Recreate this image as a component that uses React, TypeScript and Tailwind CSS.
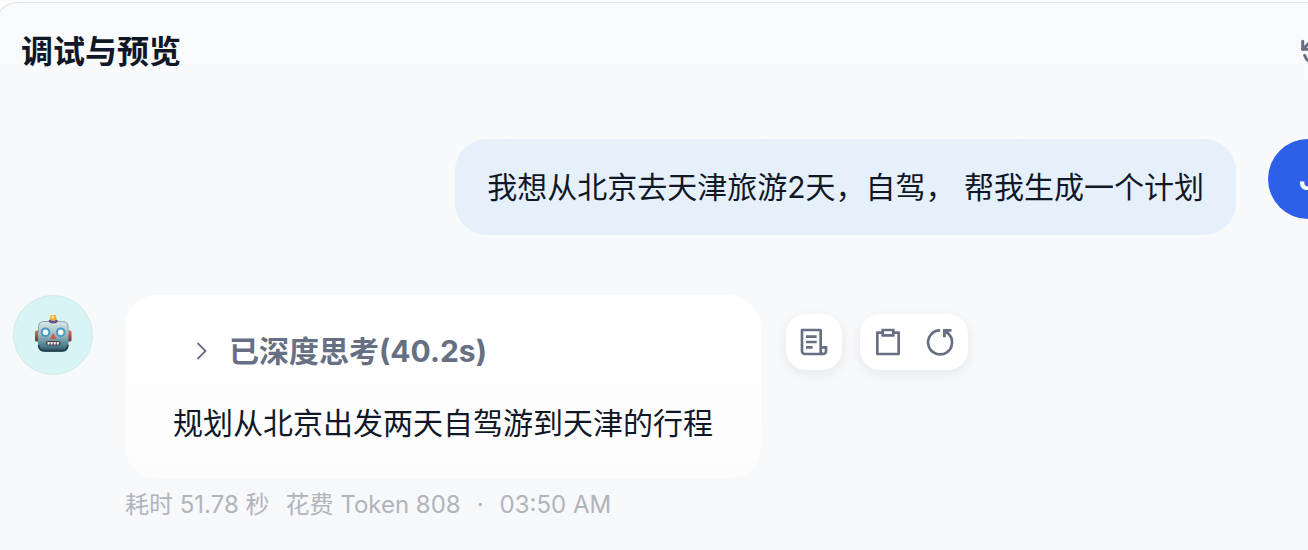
import { RiClipboardLine, RiFileList3Line } from 'react-icons/ri';

const META = ['耗时 51.78 秒', '花费 Token 808', '·', '03:50 AM'];

function RestartIcon() {
  return (
    <svg viewBox="0 0 32 32" className="size-8" fill="none" aria-hidden="true">
      <path d="M16.200 4.400A12 12 0 1 0 23.400 6.900L21.400 5.200" stroke="currentColor" strokeWidth="2.700" />
      <path d="M19 3H27.500V5.800H24.600L23.400 8.800L21.800 7.400V11.200H19Z" fill="currentColor" />
    </svg>
  );
}

function ResetIcon() {
  return (
    <svg viewBox="0 0 32 32" className="size-8" fill="none" stroke="currentColor" strokeWidth="3" strokeLinecap="round" strokeLinejoin="round" aria-hidden="true">
      <path d="M2.700 5.300V13.300H10.700M29.300 26.700V18.700H21.300" />
      <path d="M2.700 13.300L8.500 7.600A11.600 11.600 0 0 1 27 12M4.700 19.500A11.600 11.600 0 0 0 23.500 24.400L29.300 18.700" />
    </svg>
  );
}

function RobotIcon() {
  return (
    <svg viewBox="0 0 40 40" className="size-10" role="img" aria-label="robot">
      <defs>
        <linearGradient id="robot-face" x1="0" y1="0" x2="0" y2="1">
          <stop offset="0" stopColor="#dce9e8" />
          <stop offset="0.4" stopColor="#a5c0c6" />
          <stop offset="0.85" stopColor="#467787" />
          <stop offset="1" stopColor="#214450" />
        </linearGradient>
        <linearGradient id="robot-ear" x1="0" y1="0" x2="0" y2="1">
          <stop offset="0" stopColor="#e2665d" />
          <stop offset="1" stopColor="#702f39" />
        </linearGradient>
      </defs>
      <rect x="2" y="15.500" width="5" height="11" rx="1.500" fill="url(#robot-ear)" />
      <rect x="33.500" y="15.500" width="5" height="11" rx="1.500" fill="url(#robot-ear)" />
      <rect x="5" y="6" width="30.500" height="30.500" rx="5.500" fill="url(#robot-face)" />
      <path d="M5.500 18V12Q5.500 6.500 11 6.500H29.500Q35 6.500 35 12V18" fill="none" stroke="#8fa9ac" strokeWidth="1" />
      <path d="M5.600 30Q6 36 12 36H28.500Q34.500 36 34.900 30" fill="none" stroke="#1f3d49" strokeWidth="1.400" />
      <path d="M15.500 6Q16 4 20.200 4T25 6Q24 8.500 20.200 8.500T15.500 6Z" fill="#60528f" />
      <circle cx="20.200" cy="2.800" r="3.200" fill="#f7a72c" />
      <circle cx="19.800" cy="1.900" r="1.500" fill="#ffe08a" />
      <circle cx="12.500" cy="17.200" r="4.800" fill="#3f9bc4" />
      <circle cx="27.700" cy="17.200" r="4.800" fill="#3f9bc4" />
      <circle cx="12.500" cy="17.200" r="2.800" fill="#fff" />
      <circle cx="27.700" cy="17.200" r="2.800" fill="#fff" />
      <path d="M20.200 18L23.400 24H17Z" fill="#cf5548" />
      <rect x="13" y="26" width="14.500" height="4.400" rx="2" fill="#493f45" />
      <path d="M14.600 28.200H16.600M17.600 28.200H19.600M20.700 28.200H22.700M23.800 28.200H25.800" stroke="#fff" strokeWidth="2.600" />
    </svg>
  );
}

export default function App() {
  return (
    <div className="min-h-screen overflow-hidden bg-[#fcfcfd] pt-0.5 font-['Inter','Noto_Sans_CJK_SC',sans-serif] text-[#101828]" lang="zh-CN">
      <main className="-mr-20 -ml-1.5 min-h-screen rounded-tl-3xl border-t border-l border-[#dfe3eb] bg-linear-to-b from-[#f9fafc] to-[#f7f8fa]">
        <header className="flex items-center justify-between pt-6 pr-14 pl-[26px]">
          <h1 className="text-[32px] leading-[50px] font-bold">调试与预览</h1>
          <button type="button" aria-label="重新开始" className="text-[#676f83]">
            <ResetIcon />
          </button>
        </header>

        <section className="flex items-start justify-end gap-8 pt-[62px] pr-10">
          <p className="rounded-[32px] bg-[#e6f0fb] px-8 py-6 text-[30px] leading-[48px]">我想从北京去天津旅游2天，自驾， 帮我生成一个计划</p>
          <div className="flex size-20 shrink-0 items-center justify-center rounded-full bg-[#2d5fe8] text-[32px] font-semibold text-white">J</div>
        </section>

        <section className="flex items-start gap-8 pt-[60px] pl-[18px]">
          <div className="flex size-20 shrink-0 items-center justify-center rounded-full border border-[#cfe9ea] bg-[#d9f4f5]">
            <RobotIcon />
          </div>
          <div>
            <div className="flex items-start gap-[25px]">
              <article className="rounded-[32px] bg-linear-to-b from-white to-[#fcfcfd] px-12 pt-8 pb-8">
                <button type="button" className="flex items-center gap-4 pl-4 text-[30px] leading-[48px] font-bold text-[#676f83]">
                  <svg viewBox="0 0 24 24" className="size-6" fill="none" stroke="currentColor" strokeWidth="1.800" aria-hidden="true">
                    <path d="M8.500 4L16.500 12L8.500 20" />
                  </svg>
                  已深度思考(40.2s)
                </button>
                <p className="pt-6 text-[30px] leading-[48px]">规划从北京出发两天自驾游到天津的行程</p>
              </article>
              <div className="flex gap-[18px] pt-[19px] text-[#676f83]">
                <div className="flex rounded-[20px] bg-white p-3 shadow-[0_4px_12px_rgba(16,24,40,0.08)]">
                  <button type="button" aria-label="日志">
                    <RiFileList3Line className="size-8" />
                  </button>
                </div>
                <div className="flex gap-5 rounded-[20px] bg-white p-3 shadow-[0_4px_12px_rgba(16,24,40,0.08)]">
                  <button type="button" aria-label="复制">
                    <RiClipboardLine className="size-8" />
                  </button>
                  <button type="button" aria-label="重新生成">
                    <RestartIcon />
                  </button>
                </div>
              </div>
            </div>
            <footer className="flex gap-4 pt-2 text-2xl leading-9 text-[#b2b4ba]">
              {META.map((item) => (
                <span key={item}>{item}</span>
              ))}
            </footer>
          </div>
        </section>
      </main>
    </div>
  );
}
